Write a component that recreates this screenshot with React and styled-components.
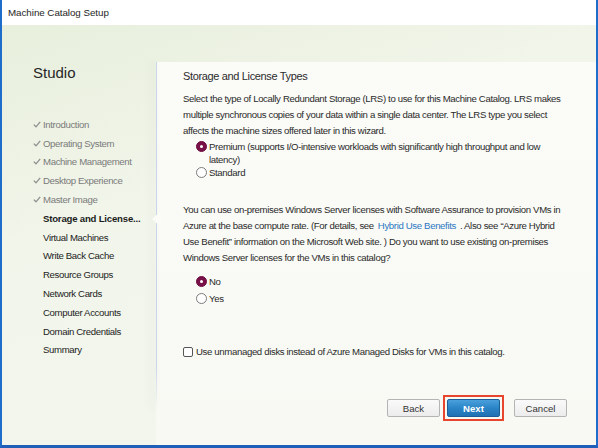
import React from "react";
import styled, { createGlobalStyle } from "styled-components";

const GlobalStyle = createGlobalStyle`
  html, body { margin: 0; padding: 0; background: #fff; }
  body { font-family: "Liberation Sans", Arial, sans-serif; }
  * { box-sizing: border-box; }
`;

const Window = styled.div`
  width: 598px;
  height: 448px;
  display: flex;
  flex-direction: column;
  border-left: 2px solid #1f6dcb;
  border-right: 2px solid #1f6dcb;
  border-bottom: 3px solid #1f5fb8;
  overflow: hidden;
`;

const TitleBar = styled.div`
  height: 25px;
  flex: none;
  display: flex;
  align-items: center;
  padding-left: 6px;
  background: #fff;
  color: #1e1e1e;
  font-family: "Liberation Sans", Arial, sans-serif;
  font-size: 9.8px;
  letter-spacing: -0.05px;
`;

const Body = styled.div`
  flex: 1;
  display: flex;
  background: linear-gradient(160deg, #e8efdc 0%, #f1f5ea 35%, #f4f6ef 100%);
`;

const Sidebar = styled.div`
  width: 154px;
  flex: none;
  padding: 38px 0 0 31px;
`;

const Brand = styled.div`
  font-family: "Liberation Sans", Arial, sans-serif;
  font-size: 15px;
  color: #262626;
  line-height: 20px;
`;

const NavList = styled.ul`
  list-style: none;
  margin: 32px 0 0;
  padding: 0;
`;

const NavItem = styled.li`
  height: 18.8px;
  display: flex;
  align-items: center;
  font-size: 9.6px;
  letter-spacing: ${(p) => (p.$state === "current" ? "-0.2px" : "-0.35px")};
  color: ${(p) => (p.$state === "done" ? "#7a7a7a" : "#1c1c1c")};
  font-weight: ${(p) => (p.$state === "current" ? 700 : 400)};
  white-space: nowrap;
`;

const Check = styled.span`
  width: 10px;
  display: inline-flex;
  justify-content: flex-start;
  svg { display: block; }
`;

const Panel = styled.div`
  flex: 1;
  position: relative;
  margin-top: 37px;
  display: flex;
  flex-direction: column;
  padding: 7px 0 0 27px;
  background: linear-gradient(180deg, #fbfbf8 0%, #f8f9f3 100%);
  &::before {
    content: "";
    position: absolute;
    left: 0;
    top: 0;
    height: 346px;
    width: 1px;
    background: linear-gradient(180deg, #c9d5ea 0%, #c9d5ea 88%, rgba(201,213,234,0) 100%);
    box-shadow: -4px 0 8px rgba(80, 90, 80, 0.2);
  }
`;

const Pointer = styled.div`
  position: absolute;
  left: -4px;
  top: 149px;
  width: 0;
  height: 0;
  border-top: 8px solid transparent;
  border-bottom: 8px solid transparent;
  border-right: 9px solid #fbfbf8;
`;

const Heading = styled.h2`
  margin: 0;
  font-size: 11px;
  letter-spacing: -0.35px;
  font-weight: 400;
  color: #2c2c2c;
  line-height: 14px;
`;

const Paragraph = styled.p`
  margin: ${(p) => p.$mt || 0}px 0 0;
  width: 385px;
  font-size: 9.6px;
  letter-spacing: -0.35px;
  line-height: 16px;
  color: #2a2a2a;
`;

const Options = styled.div`
  margin: ${(p) => p.$mt || 0}px 0 0 13px;
  display: flex;
  flex-direction: column;
  gap: ${(p) => p.$gap || 0}px;
`;

const RadioRow = styled.label`
  display: flex;
  align-items: flex-start;
  font-size: 9.6px;
  letter-spacing: -0.35px;
  line-height: 13px;
  color: #2a2a2a;
  width: 360px;
`;

const RadioDot = styled.span`
  flex: none;
  width: 11px;
  height: 11px;
  margin-top: 1px;
  margin-right: 2px;
  border-radius: 50%;
  border: 1px solid ${(p) => (p.$on ? "#6d0d3f" : "#7b7b7b")};
  background: ${(p) => (p.$on ? "#7a1048" : "#fff")};
  display: flex;
  align-items: center;
  justify-content: center;
  &::after {
    content: "";
    width: 3px;
    height: 3px;
    border-radius: 50%;
    background: ${(p) => (p.$on ? "#fff" : "transparent")};
  }
`;

const Link = styled.a`
  color: #2b78c2;
  text-decoration: none;
  padding: 0 4px;
`;

const Spacer = styled.div`
  flex: 1;
`;

const CheckRow = styled.label`
  display: flex;
  align-items: center;
  font-size: 9.6px;
  letter-spacing: -0.35px;
  color: #2a2a2a;
  line-height: 13px;
`;

const CheckBox = styled.span`
  width: 10px;
  height: 10px;
  border: 1px solid #555;
  border-radius: 2px;
  background: #fff;
  margin-right: 3px;
`;

const Footer = styled.div`
  display: flex;
  justify-content: flex-end;
  align-items: center;
  padding: 37px 29px 24px 0;
`;

const Button = styled.button`
  width: 53px;
  height: 18px;
  margin-left: ${(p) => p.$ml || 0}px;
  padding: 0;
  font-family: "Liberation Sans", Arial, sans-serif;
  font-size: 9.6px;
  border-radius: 2px;
  border: 1px solid ${(p) => (p.$primary ? "#1b5e96" : "#b4b4b4")};
  color: ${(p) => (p.$primary ? "#fff" : "#333")};
  font-weight: ${(p) => (p.$primary ? 700 : 400)};
  background: ${(p) =>
    p.$primary
      ? "linear-gradient(180deg, #4aa0dc 0%, #2a84c6 50%, #1f72b4 100%)"
      : "linear-gradient(180deg, #fafafa 0%, #ececec 100%)"};
`;

const Highlight = styled.div`
  margin-left: 3px;
  padding: 2px;
  border: 2px solid #e8452e;
  display: flex;
`;

const CheckIcon = () => (
  <svg width="8" height="7" viewBox="0 0 8 7">
    <path d="M0.8 3.6 L3 5.8 L7.2 0.8" fill="none" stroke="#8f8f8f" strokeWidth="1.3" />
  </svg>
);

const steps = [
  ["Introduction", "done"],
  ["Operating System", "done"],
  ["Machine Management", "done"],
  ["Desktop Experience", "done"],
  ["Master Image", "done"],
  ["Storage and License...", "current"],
  ["Virtual Machines", "todo"],
  ["Write Back Cache", "todo"],
  ["Resource Groups", "todo"],
  ["Network Cards", "todo"],
  ["Computer Accounts", "todo"],
  ["Domain Credentials", "todo"],
  ["Summary", "todo"],
];

export default function App() {
  return (
    <>
      <GlobalStyle />
      <Window>
        <TitleBar>Machine Catalog Setup</TitleBar>
        <Body>
          <Sidebar>
            <Brand>Studio</Brand>
            <NavList>
              {steps.map(([label, state]) => (
                <NavItem key={label} $state={state}>
                  <Check>{state === "done" ? <CheckIcon /> : null}</Check>
                  {label}
                </NavItem>
              ))}
            </NavList>
          </Sidebar>
          <Panel>
            <Pointer />
            <Heading>Storage and License Types</Heading>
            <Paragraph $mt={8}>
              Select the type of Locally Redundant Storage (LRS) to use for this Machine Catalog. LRS makes
              multiple synchronous copies of your data within a single data center. The LRS type you select
              affects the machine sizes offered later in this wizard.
            </Paragraph>
            <Options $mt={1} $gap={0}>
              <RadioRow>
                <RadioDot $on />
                <span>Premium (supports I/O-intensive workloads with significantly high throughput and low latency)</span>
              </RadioRow>
              <RadioRow>
                <RadioDot />
                <span>Standard</span>
              </RadioRow>
            </Options>
            <Paragraph $mt={23}>
              You can use on-premises Windows Server licenses with Software Assurance to provision VMs in
              Azure at the base compute rate. (For details, see<Link>Hybrid Use Benefits</Link>. Also see
              “Azure Hybrid Use Benefit” information on the Microsoft Web site. ) Do you want to use existing
              on-premises Windows Server licenses for the VMs in this catalog?
            </Paragraph>
            <Options $mt={9} $gap={4}>
              <RadioRow>
                <RadioDot $on />
                <span>No</span>
              </RadioRow>
              <RadioRow>
                <RadioDot />
                <span>Yes</span>
              </RadioRow>
            </Options>
            <Spacer />
            <CheckRow>
              <CheckBox />
              Use unmanaged disks instead of Azure Managed Disks for VMs in this catalog.
            </CheckRow>
            <Footer>
              <Button>Back</Button>
              <Highlight>
                <Button $primary>Next</Button>
              </Highlight>
              <Button $ml={10}>Cancel</Button>
            </Footer>
          </Panel>
        </Body>
      </Window>
    </>
  );
}
